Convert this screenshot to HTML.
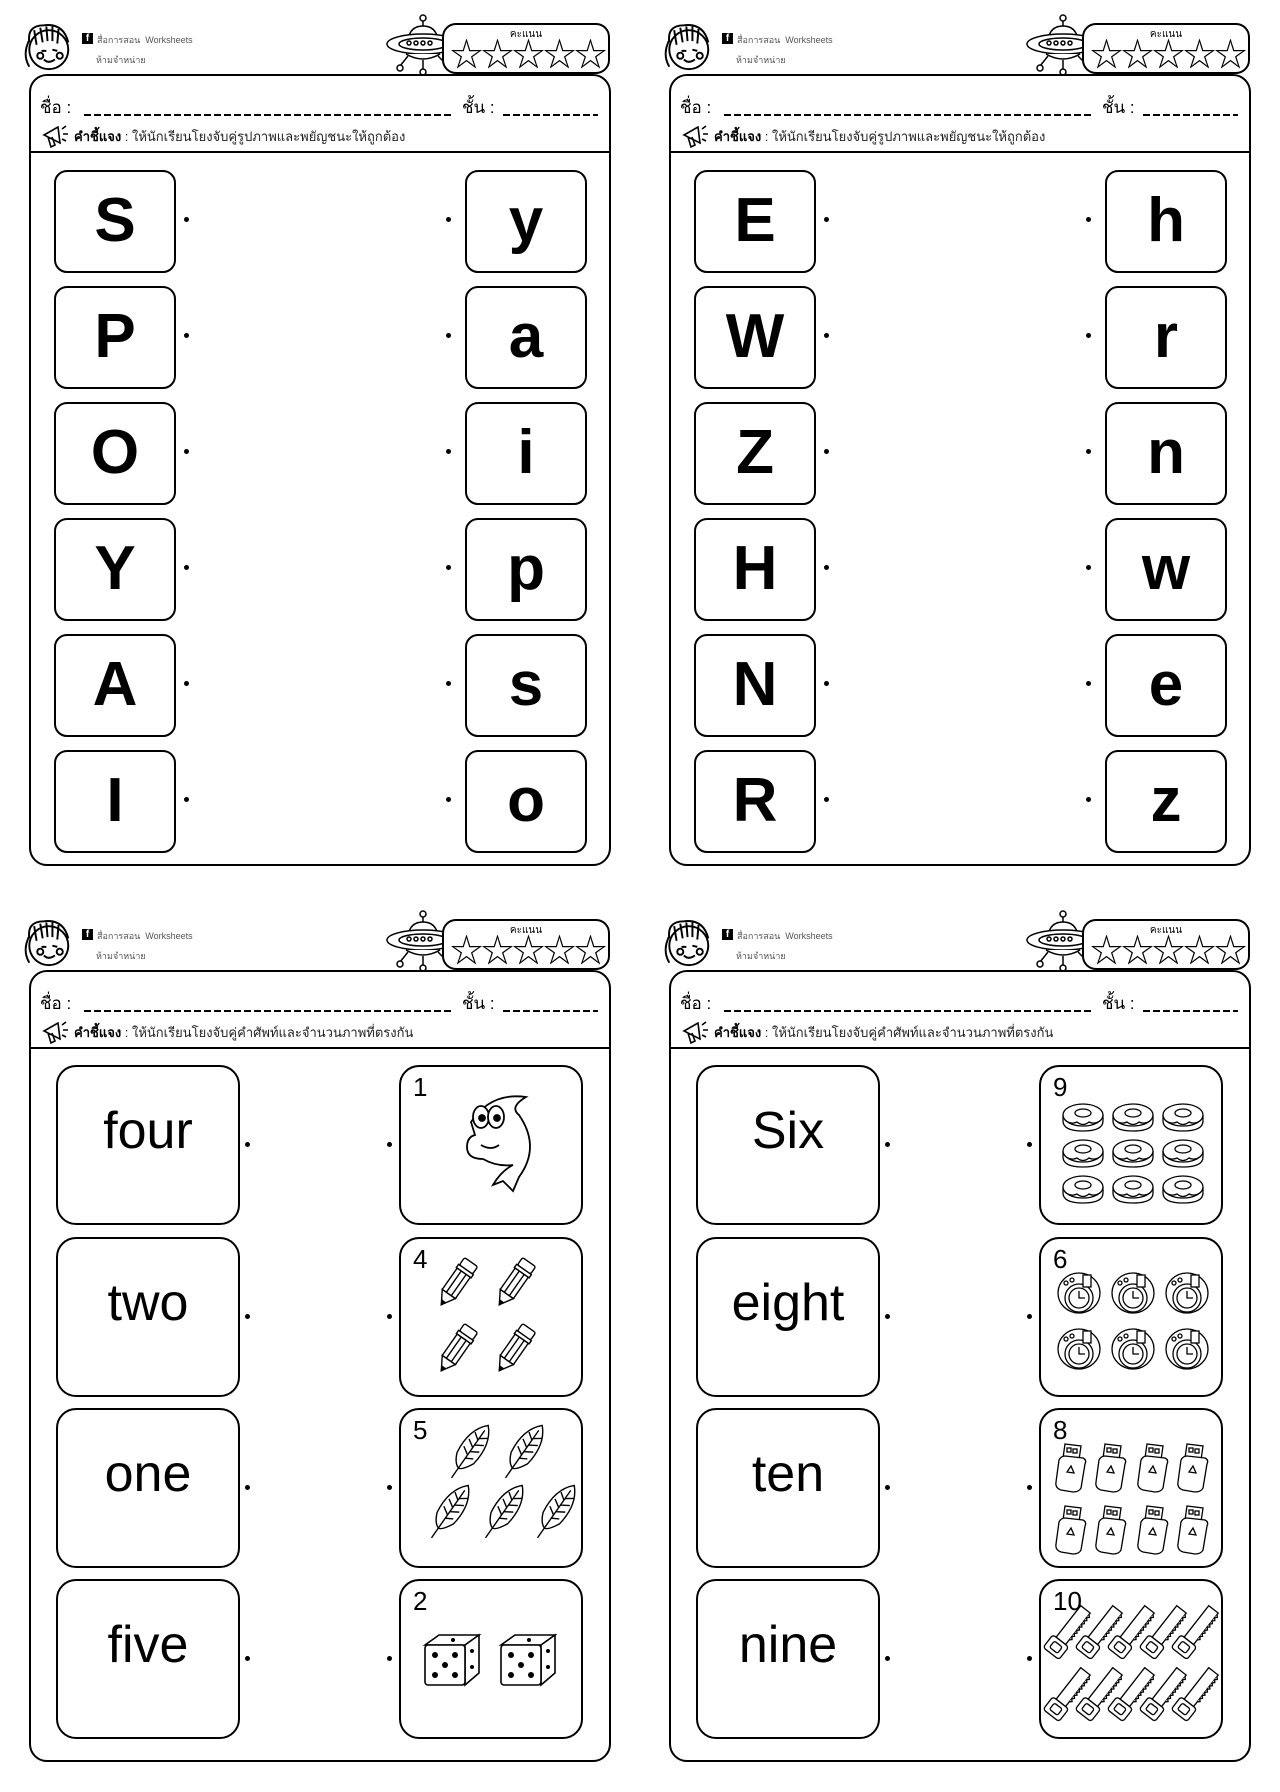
<!DOCTYPE html>
<html><head><meta charset="utf-8">
<style>
*{margin:0;padding:0;box-sizing:border-box}
body{width:1280px;height:1792px;background:#fff;position:relative;overflow:hidden;font-family:"Liberation Sans","Noto Sans CJK SC",sans-serif;color:#000}
.p{position:absolute;width:640px;height:896px}
.a{position:absolute}
.panel{position:absolute;left:29px;top:74px;width:582px;height:792px;border:2px solid #000;border-radius:18px}
.div{position:absolute;left:29px;top:151px;width:582px;height:2px;background:#000}
.nm{position:absolute;top:98px;font-size:17px;white-space:nowrap;line-height:20px}
.ul{position:absolute;top:114px;height:2px;background:repeating-linear-gradient(90deg,#000 0 7px,transparent 7px 10px)}
.ins{position:absolute;left:74px;top:126px;font-size:13px;white-space:nowrap;color:#222}
.ins b{color:#000}
.stars{position:absolute;left:442px;top:23px;width:168px;height:51px;border:2px solid #000;border-radius:14px;background:#fff}
.stars .t{position:absolute;left:0;width:100%;top:2px;text-align:center;font-size:10px}
.stars .s{position:absolute;left:6px;top:12px;font-size:33px;line-height:36px;letter-spacing:-2px;white-space:nowrap}
.fb{position:absolute;left:82px;top:33px;width:11px;height:11px;background:#000;color:#fff;font-size:10px;font-weight:bold;text-align:center;line-height:12px}
.sm{position:absolute;font-size:9px;color:#555;white-space:nowrap}
.lb{position:absolute;width:122px;height:103px;border:2px solid #000;border-radius:13px;text-align:center;font-size:62px;font-weight:bold;line-height:98px}
.wb{position:absolute;width:184px;height:160px;border:2px solid #000;border-radius:20px;text-align:center;font-size:52px;line-height:128px}
.pb{position:absolute;width:184px;height:160px;border:2px solid #000;border-radius:20px}
.pb .n{position:absolute;left:12px;top:6px;font-size:26px;line-height:28px}
.pb svg{position:absolute;left:0;top:0}
.dot{position:absolute;width:5px;height:5px;background:#000;border-radius:50%}
</style></head><body>

<svg width="0" height="0" style="position:absolute">
<defs>
<g id="face" fill="none" stroke="#000" stroke-width="1.6">
<circle cx="22" cy="26" r="16"/><path d="M6 20 Q4 6 18 6 Q34 4 38 20 M10 10 l2 12 M15 8 l2 12 M20 7 l1 12 M25 7 l0 12 M30 9 l-1 12 M6 18 Q0 30 6 40"/>
<circle cx="15" cy="31" r="2.5"/><circle cx="31" cy="31" r="2.5"/><path d="M18 34 Q22 38 27 34 M16 27 l4 0 M25 26 l4 1"/>
</g>
<g id="ufo" fill="#fff" stroke="#000" stroke-width="1.5">
<circle cx="47" cy="6" r="3"/><path d="M47 9 v8"/><path d="M32 28 Q34 14 47 14 Q60 14 62 28"/>
<ellipse cx="47" cy="32" rx="36" ry="10"/><ellipse cx="47" cy="32" rx="24" ry="6"/>
<circle cx="33" cy="31" r="2"/><circle cx="40" cy="31" r="2"/><circle cx="47" cy="31" r="2"/><circle cx="54" cy="31" r="2"/>
<path d="M30 42 Q47 52 64 42"/><path d="M32 44 l-8 10 M47 48 v10 M62 44 l6 6"/><circle cx="24" cy="56" r="3"/><circle cx="47" cy="60" r="3"/>
</g>
<g id="meg" fill="none" stroke="#000" stroke-width="1.6">
<path d="M4 14 L18 6 L20 22 Z M8 16 l3 10 l4 -2 l-3 -8 M22 8 l4 -3 M23 13 l5 0 M22 18 l4 2"/>
</g>
<g id="pencil" fill="#fff" stroke="#000" stroke-width="1.4">
<g transform="rotate(35 15 25)"><rect x="8" y="0" width="16" height="9" rx="2"/><rect x="7" y="9" width="18" height="4"/><rect x="8" y="13" width="16" height="26"/><path d="M13 13v26M19 13v26"/><path d="M8 39 L16 52 L24 39 Z"/><path d="M14 48 L16 52 L18 48 Z" fill="#000"/></g>
</g>
<g id="feather" fill="#fff" stroke="#000" stroke-width="1.4">
<g transform="rotate(35 20 30)"><path d="M20 0 Q34 14 30 40 Q24 52 20 52 Q14 50 10 40 Q6 14 20 0 Z"/><path d="M20 6 V64"/><path d="M20 16 l7 -5 M20 24 l8 -5 M20 32 l8 -5 M20 40 l7 -4 M20 18 l-7 -5 M20 27 l-8 -5 M20 36 l-8 -5"/></g>
</g>
<g id="die" fill="#fff" stroke="#000" stroke-width="1.6">
<path d="M0 12 L14 2 L54 2 L40 12 Z"/><path d="M40 12 L54 2 L54 40 L40 52 Z"/><rect x="0" y="12" width="40" height="40" rx="3"/>
<g fill="#000" stroke="none"><circle cx="10" cy="22" r="3"/><circle cx="20" cy="32" r="3"/><circle cx="30" cy="42" r="3"/><circle cx="10" cy="42" r="3"/><circle cx="30" cy="22" r="3"/><circle cx="47" cy="18" r="2"/><circle cx="47" cy="34" r="2"/><circle cx="28" cy="7" r="2"/></g>
</g>
<g id="donut" fill="#fff" stroke="#000" stroke-width="1.3">
<path d="M0 12 v6 Q0 28 20 28 Q40 28 40 18 v-6"/><ellipse cx="20" cy="12" rx="20" ry="11"/><ellipse cx="20" cy="10" rx="8" ry="4"/><path d="M2 17 Q8 22 14 19 Q20 24 26 19 Q32 22 38 17"/>
</g>
<g id="clock" fill="#fff" stroke="#000" stroke-width="1.3">
<ellipse cx="22" cy="22" rx="21" ry="20"/><circle cx="22" cy="27" r="14"/><circle cx="22" cy="27" r="10"/><path d="M22 20v7h6"/><circle cx="9" cy="12" r="2"/><circle cx="15" cy="9" r="2"/><rect x="26" y="4" width="8" height="12"/>
</g>
<g id="usb" fill="#fff" stroke="#000" stroke-width="1.3">
<path d="M10 2 L26 4 L24 18 L8 16 Z"/><rect x="12" y="6" width="4" height="4"/><rect x="18" y="7" width="4" height="4"/><path d="M4 18 Q6 14 10 14 L28 16 Q32 18 30 22 L26 46 Q24 50 18 50 L6 48 Q0 46 1 40 Z"/><path d="M12 30 l4 -6 l3 7 z"/>
</g>
<g id="saw" fill="#fff" stroke="#000" stroke-width="1.3">
<g transform="rotate(38 14 30)"><path d="M8 0 L20 0 L20 40 L8 40 Z"/><path d="M20 2 l2 2 l-2 2 l2 2 l-2 2 l2 2 l-2 2 l2 2 l-2 2 l2 2 l-2 2 l2 2 l-2 2 l2 2 l-2 2 l2 2 l-2 2"/><rect x="4" y="40" width="20" height="16" rx="3"/><rect x="9" y="44" width="10" height="8" rx="2"/></g>
</g>
</defs></svg>

<div class="p" style="left:0;top:0">
<svg class="a" style="left:22px;top:18px" width="56" height="56" viewBox="0 0 46 46"><use href="#face"/></svg>
<div class="fb">f</div><div class="sm" style="left:97px;top:33px">สื่อการสอน &nbsp;Worksheets</div><div class="sm" style="left:96px;top:53px">ห้ามจำหน่าย</div>
<svg class="a" style="left:376px;top:12px" width="96" height="66"><use href="#ufo"/></svg>
<div class="stars"><div class="t">คะแนน</div><div class="s">☆☆☆☆☆</div></div>
<div class="panel"></div><div class="div"></div>
<div class="nm" style="left:40px">ชื่อ :</div><div class="ul" style="left:84px;width:370px"></div>
<div class="nm" style="left:462px">ชั้น :</div><div class="ul" style="left:503px;width:95px"></div>
<svg class="a" style="left:40px;top:121px" width="30" height="30"><use href="#meg"/></svg>
<div class="ins"><b>คำชี้แจง</b> : ให้นักเรียนโยงจับคู่รูปภาพและพยัญชนะให้ถูกต้อง</div>
<div class="lb" style="left:54px;top:170px">S</div><div class="lb" style="left:465px;top:170px">y</div>
<div class="lb" style="left:54px;top:286px">P</div><div class="lb" style="left:465px;top:286px">a</div>
<div class="lb" style="left:54px;top:402px">O</div><div class="lb" style="left:465px;top:402px">i</div>
<div class="lb" style="left:54px;top:518px">Y</div><div class="lb" style="left:465px;top:518px">p</div>
<div class="lb" style="left:54px;top:634px">A</div><div class="lb" style="left:465px;top:634px">s</div>
<div class="lb" style="left:54px;top:750px">I</div><div class="lb" style="left:465px;top:750px">o</div>
<div class="dot" style="left:184px;top:217px"></div><div class="dot" style="left:446px;top:217px"></div>
<div class="dot" style="left:184px;top:333px"></div><div class="dot" style="left:446px;top:333px"></div>
<div class="dot" style="left:184px;top:449px"></div><div class="dot" style="left:446px;top:449px"></div>
<div class="dot" style="left:184px;top:565px"></div><div class="dot" style="left:446px;top:565px"></div>
<div class="dot" style="left:184px;top:681px"></div><div class="dot" style="left:446px;top:681px"></div>
<div class="dot" style="left:184px;top:797px"></div><div class="dot" style="left:446px;top:797px"></div>
</div>

<div class="p" style="left:640px;top:0">
<svg class="a" style="left:22px;top:18px" width="56" height="56" viewBox="0 0 46 46"><use href="#face"/></svg>
<div class="fb">f</div><div class="sm" style="left:97px;top:33px">สื่อการสอน &nbsp;Worksheets</div><div class="sm" style="left:96px;top:53px">ห้ามจำหน่าย</div>
<svg class="a" style="left:376px;top:12px" width="96" height="66"><use href="#ufo"/></svg>
<div class="stars"><div class="t">คะแนน</div><div class="s">☆☆☆☆☆</div></div>
<div class="panel"></div><div class="div"></div>
<div class="nm" style="left:40px">ชื่อ :</div><div class="ul" style="left:84px;width:370px"></div>
<div class="nm" style="left:462px">ชั้น :</div><div class="ul" style="left:503px;width:95px"></div>
<svg class="a" style="left:40px;top:121px" width="30" height="30"><use href="#meg"/></svg>
<div class="ins"><b>คำชี้แจง</b> : ให้นักเรียนโยงจับคู่รูปภาพและพยัญชนะให้ถูกต้อง</div>
<div class="lb" style="left:54px;top:170px">E</div><div class="lb" style="left:465px;top:170px">h</div>
<div class="lb" style="left:54px;top:286px">W</div><div class="lb" style="left:465px;top:286px">r</div>
<div class="lb" style="left:54px;top:402px">Z</div><div class="lb" style="left:465px;top:402px">n</div>
<div class="lb" style="left:54px;top:518px">H</div><div class="lb" style="left:465px;top:518px">w</div>
<div class="lb" style="left:54px;top:634px">N</div><div class="lb" style="left:465px;top:634px">e</div>
<div class="lb" style="left:54px;top:750px">R</div><div class="lb" style="left:465px;top:750px">z</div>
<div class="dot" style="left:184px;top:217px"></div><div class="dot" style="left:446px;top:217px"></div>
<div class="dot" style="left:184px;top:333px"></div><div class="dot" style="left:446px;top:333px"></div>
<div class="dot" style="left:184px;top:449px"></div><div class="dot" style="left:446px;top:449px"></div>
<div class="dot" style="left:184px;top:565px"></div><div class="dot" style="left:446px;top:565px"></div>
<div class="dot" style="left:184px;top:681px"></div><div class="dot" style="left:446px;top:681px"></div>
<div class="dot" style="left:184px;top:797px"></div><div class="dot" style="left:446px;top:797px"></div>
</div>

<div class="p" style="left:0;top:896px">
<svg class="a" style="left:22px;top:18px" width="56" height="56" viewBox="0 0 46 46"><use href="#face"/></svg>
<div class="fb">f</div><div class="sm" style="left:97px;top:33px">สื่อการสอน &nbsp;Worksheets</div><div class="sm" style="left:96px;top:53px">ห้ามจำหน่าย</div>
<svg class="a" style="left:376px;top:12px" width="96" height="66"><use href="#ufo"/></svg>
<div class="stars"><div class="t">คะแนน</div><div class="s">☆☆☆☆☆</div></div>
<div class="panel"></div><div class="div"></div>
<div class="nm" style="left:40px">ชื่อ :</div><div class="ul" style="left:84px;width:370px"></div>
<div class="nm" style="left:462px">ชั้น :</div><div class="ul" style="left:503px;width:95px"></div>
<svg class="a" style="left:40px;top:121px" width="30" height="30"><use href="#meg"/></svg>
<div class="ins"><b>คำชี้แจง</b> : ให้นักเรียนโยงจับคู่คำศัพท์และจำนวนภาพที่ตรงกัน</div>
<div class="wb" style="left:56px;top:169px">four</div>
<div class="wb" style="left:56px;top:341px">two</div>
<div class="wb" style="left:56px;top:512px">one</div>
<div class="wb" style="left:56px;top:683px">five</div>
<div class="pb" style="left:399px;top:169px"><div class="n">1</div><svg width="184" height="160">
<g fill="#fff" stroke="#000" stroke-width="1.8"><path d="M70 55 Q90 25 125 30 Q108 40 118 48 Q140 80 118 110 L112 124 L102 114 L92 118 Q100 104 112 98 Q96 100 82 92 Q66 92 66 80 Q66 70 74 68 Z"/><ellipse cx="80" cy="50" rx="8" ry="11"/><ellipse cx="95" cy="50" rx="8" ry="11"/><circle cx="81" cy="51" r="3" fill="#000"/><circle cx="96" cy="51" r="3" fill="#000"/><path d="M80 78 Q90 84 98 78"/></g></svg></div>
<div class="pb" style="left:399px;top:341px"><div class="n">4</div><svg width="184" height="160">
<use href="#pencil" x="40" y="18"/><use href="#pencil" x="98" y="18"/><use href="#pencil" x="40" y="84"/><use href="#pencil" x="98" y="84"/></svg></div>
<div class="pb" style="left:399px;top:512px"><div class="n">5</div><svg width="184" height="160">
<use href="#feather" x="50" y="10"/><use href="#feather" x="104" y="10"/><use href="#feather" x="30" y="70"/><use href="#feather" x="84" y="70"/><use href="#feather" x="136" y="70"/></svg></div>
<div class="pb" style="left:399px;top:683px"><div class="n">2</div><svg width="184" height="160">
<use href="#die" x="24" y="52"/><use href="#die" x="100" y="52"/></svg></div>
<div class="dot" style="left:245px;top:246px"></div><div class="dot" style="left:387px;top:246px"></div>
<div class="dot" style="left:245px;top:418px"></div><div class="dot" style="left:387px;top:418px"></div>
<div class="dot" style="left:245px;top:589px"></div><div class="dot" style="left:387px;top:589px"></div>
<div class="dot" style="left:245px;top:760px"></div><div class="dot" style="left:387px;top:760px"></div>
</div>

<div class="p" style="left:640px;top:896px">
<svg class="a" style="left:22px;top:18px" width="56" height="56" viewBox="0 0 46 46"><use href="#face"/></svg>
<div class="fb">f</div><div class="sm" style="left:97px;top:33px">สื่อการสอน &nbsp;Worksheets</div><div class="sm" style="left:96px;top:53px">ห้ามจำหน่าย</div>
<svg class="a" style="left:376px;top:12px" width="96" height="66"><use href="#ufo"/></svg>
<div class="stars"><div class="t">คะแนน</div><div class="s">☆☆☆☆☆</div></div>
<div class="panel"></div><div class="div"></div>
<div class="nm" style="left:40px">ชื่อ :</div><div class="ul" style="left:84px;width:370px"></div>
<div class="nm" style="left:462px">ชั้น :</div><div class="ul" style="left:503px;width:95px"></div>
<svg class="a" style="left:40px;top:121px" width="30" height="30"><use href="#meg"/></svg>
<div class="ins"><b>คำชี้แจง</b> : ให้นักเรียนโยงจับคู่คำศัพท์และจำนวนภาพที่ตรงกัน</div>
<div class="wb" style="left:56px;top:169px">Six</div>
<div class="wb" style="left:56px;top:341px">eight</div>
<div class="wb" style="left:56px;top:512px">ten</div>
<div class="wb" style="left:56px;top:683px">nine</div>
<div class="pb" style="left:399px;top:169px"><div class="n">9</div><svg width="184" height="160">
<use href="#donut" x="22" y="36"/><use href="#donut" x="72" y="36"/><use href="#donut" x="122" y="36"/>
<use href="#donut" x="22" y="72"/><use href="#donut" x="72" y="72"/><use href="#donut" x="122" y="72"/>
<use href="#donut" x="22" y="108"/><use href="#donut" x="72" y="108"/><use href="#donut" x="122" y="108"/></svg></div>
<div class="pb" style="left:399px;top:341px"><div class="n">6</div><svg width="184" height="160">
<use href="#clock" x="16" y="32"/><use href="#clock" x="70" y="32"/><use href="#clock" x="124" y="32"/>
<use href="#clock" x="16" y="88"/><use href="#clock" x="70" y="88"/><use href="#clock" x="124" y="88"/></svg></div>
<div class="pb" style="left:399px;top:512px"><div class="n">8</div><svg width="184" height="160">
<use href="#usb" x="14" y="32"/><use href="#usb" x="54" y="32"/><use href="#usb" x="96" y="32"/><use href="#usb" x="136" y="32"/>
<use href="#usb" x="14" y="94"/><use href="#usb" x="54" y="94"/><use href="#usb" x="96" y="94"/><use href="#usb" x="136" y="94"/></svg></div>
<div class="pb" style="left:399px;top:683px"><div class="n">10</div><svg width="184" height="160">
<use href="#saw" x="12" y="22"/><use href="#saw" x="44" y="22"/><use href="#saw" x="76" y="22"/><use href="#saw" x="108" y="22"/><use href="#saw" x="140" y="22"/>
<use href="#saw" x="12" y="84"/><use href="#saw" x="44" y="84"/><use href="#saw" x="76" y="84"/><use href="#saw" x="108" y="84"/><use href="#saw" x="140" y="84"/></svg></div>
<div class="dot" style="left:245px;top:246px"></div><div class="dot" style="left:387px;top:246px"></div>
<div class="dot" style="left:245px;top:418px"></div><div class="dot" style="left:387px;top:418px"></div>
<div class="dot" style="left:245px;top:589px"></div><div class="dot" style="left:387px;top:589px"></div>
<div class="dot" style="left:245px;top:760px"></div><div class="dot" style="left:387px;top:760px"></div>
</div>

</body></html>
